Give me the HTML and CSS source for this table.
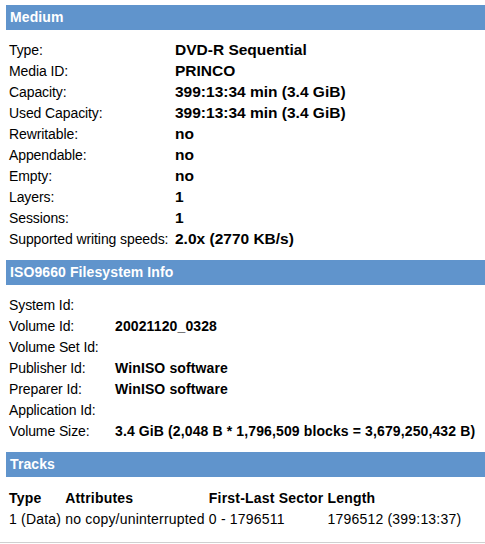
FILE: index.html
```html
<!DOCTYPE html>
<html>
<head>
<meta charset="utf-8">
<link rel="stylesheet" href="styles.css">
</head>
<body>
<div class="page">
  <div class="section">
    <div class="header">Medium</div>
    <div class="info info-medium">
      <div class="label">Type:</div><div class="value">DVD-R Sequential</div>
      <div class="label">Media ID:</div><div class="value">PRINCO</div>
      <div class="label">Capacity:</div><div class="value">399:13:34 min (3.4 GiB)</div>
      <div class="label">Used Capacity:</div><div class="value">399:13:34 min (3.4 GiB)</div>
      <div class="label">Rewritable:</div><div class="value">no</div>
      <div class="label">Appendable:</div><div class="value">no</div>
      <div class="label">Empty:</div><div class="value">no</div>
      <div class="label">Layers:</div><div class="value">1</div>
      <div class="label">Sessions:</div><div class="value">1</div>
      <div class="label">Supported writing speeds:</div><div class="value">2.0x (2770 KB/s)</div>
    </div>
  </div>
  <div class="section">
    <div class="header">ISO9660 Filesystem Info</div>
    <div class="info info-iso">
      <div class="label">System Id:</div><div class="value"></div>
      <div class="label">Volume Id:</div><div class="value">20021120_0328</div>
      <div class="label">Volume Set Id:</div><div class="value"></div>
      <div class="label">Publisher Id:</div><div class="value">WinISO software</div>
      <div class="label">Preparer Id:</div><div class="value">WinISO software</div>
      <div class="label">Application Id:</div><div class="value"></div>
      <div class="label">Volume Size:</div><div class="value">3.4 GiB (2,048 B * 1,796,509 blocks = 3,679,250,432 B)</div>
    </div>
  </div>
  <div class="section">
    <div class="header">Tracks</div>
    <table class="tracks">
      <thead>
        <tr><th>Type</th><th>Attributes</th><th>First-Last Sector</th><th>Length</th></tr>
      </thead>
      <tbody>
        <tr><td>1 (Data)</td><td>no copy/uninterrupted</td><td>0 - 1796511</td><td>1796512 (399:13:37)</td></tr>
      </tbody>
    </table>
  </div>
</div>
<div class="bottom-line"></div>
</body>
</html>
```
FILE: styles.css
```css
html, body {
  margin: 0;
  padding: 0;
  background: #ffffff;
  overflow: hidden;
}
body {
  font-family: "Liberation Sans", Arial, sans-serif;
  font-size: 14px;
  letter-spacing: 0.2px;
  color: #000000;
}
.page {
  padding: 5px 0 0 6px;
}
.section {
  padding-bottom: 10px;
}
.header {
  background: #6094cc;
  color: #ffffff;
  font-weight: bold;
  height: 25px;
  line-height: 25px;
  padding-left: 4px;
  letter-spacing: 0.1px;
}
.info {
  display: grid;
  padding: 10px 0 0 3px;
  grid-auto-rows: 21px;
  line-height: 21px;
}
.info-medium {
  grid-template-columns: 166px 1fr;
  align-items: baseline;
  line-height: 20px;
}
.info-iso {
  grid-template-columns: 106px 1fr;
}
.label {
  white-space: nowrap;
  letter-spacing: -0.1px;
}
.value {
  font-weight: bold;
  white-space: nowrap;
  letter-spacing: 0.12px;
}
.info-medium .value {
  font-size: 15.5px;
  letter-spacing: 0;
}
.tracks {
  margin-top: 11px;
  margin-left: 1px;
  border-collapse: collapse;
  line-height: 21px;
}
.tracks th, .tracks td {
  padding: 0 2px;
  text-align: left;
  white-space: nowrap;
  font-size: 14px;
}
.tracks th {
  font-weight: bold;
}
.bottom-line {
  position: absolute;
  left: 0;
  right: 0;
  top: 542px;
  height: 1px;
  background: #d0d0d0;
}
```
